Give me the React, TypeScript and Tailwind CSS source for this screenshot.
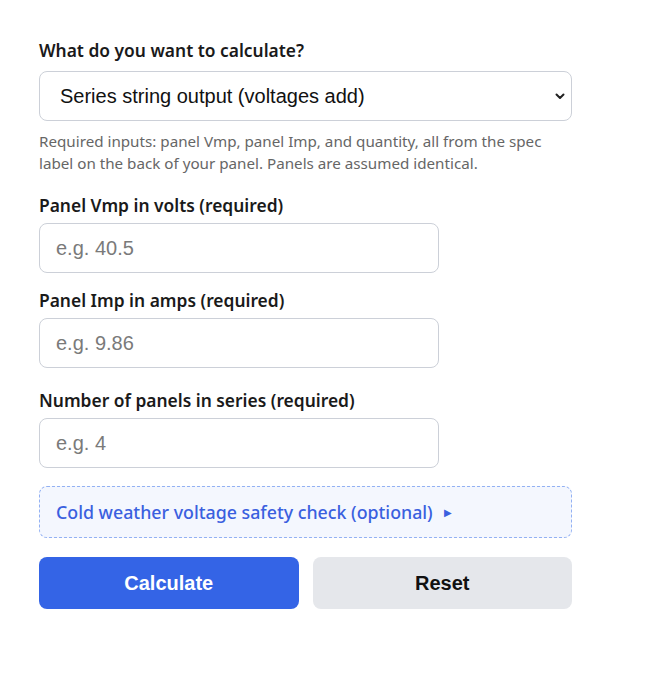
import { useState } from "react";

const labelCls =
    "block text-[17.4px] leading-6 font-semibold text-[#1a1a1a] font-['Noto_Sans','Segoe_UI',sans-serif]";
const inputCls =
    "block w-[400px] h-[50px] rounded-lg border border-[#ccd0d8] bg-white px-4 text-[20px] text-[#222] placeholder:text-[#7a7a7a] font-['Liberation_Sans',Arial,sans-serif] outline-none";

function Field({ label, placeholder, className }: { label: string; placeholder: string; className?: string }) {
    return (
        <div className={className}>
            <label className={labelCls}>{label}</label>
            <input type="text" inputMode="decimal" placeholder={placeholder} className={`${inputCls} mt-[6px]`} />
        </div>
    );
}

export default function App() {
    const [mode, setMode] = useState("series");

    return (
        <div className="min-h-screen bg-white pt-[38px] pl-[39px]">
            <div className="w-[533px]">
                <label className={labelCls}>What do you want to calculate?</label>
                <div className="relative mt-[9px]">
                    <select
                        value={mode}
                        onChange={e => setMode(e.target.value)}
                        className="block w-full h-[50px] appearance-none rounded-lg border border-[#ccd0d8] bg-white pl-[20px] pr-10 text-[20px] text-[#111] font-['Liberation_Sans',Arial,sans-serif] outline-none"
                    >
                        <option value="series">Series string output (voltages add)</option>
                        <option value="parallel">Parallel output (currents add)</option>
                    </select>
                    <svg
                        className="pointer-events-none absolute right-[6px] top-1/2 -translate-y-1/2"
                        width="12"
                        height="12"
                        viewBox="0 0 12 12"
                        fill="none"
                    >
                        <path d="M2.5 4.5 L6 8 L9.5 4.5" stroke="#222" strokeWidth="2" strokeLinecap="round" strokeLinejoin="round" />
                    </svg>
                </div>
                <p className="mt-[9px] text-[15.2px] leading-[22px] text-[#666] font-['Noto_Sans','Segoe_UI',sans-serif]">
                    Required inputs: panel Vmp, panel Imp, and quantity, all from the spec label on the back of your panel. Panels are assumed identical.
                </p>

                <Field className="mt-[19px]" label="Panel Vmp in volts (required)" placeholder="e.g. 40.5" />
                <Field className="mt-[15px]" label="Panel Imp in amps (required)" placeholder="e.g. 9.86" />
                <Field className="mt-[20px]" label="Number of panels in series (required)" placeholder="e.g. 4" />

                <details className="mt-[18px] rounded-lg border border-dashed border-[#93b1f3] bg-[#f4f7fe]">
                    <summary className="flex h-[50px] cursor-pointer list-none items-center px-4 text-[17.8px] font-medium text-[#3a60df] font-['Noto_Sans','Segoe_UI',sans-serif] [&::-webkit-details-marker]:hidden">
                        Cold weather voltage safety check (optional)
                        <span className="ml-[11px] text-[10px]">▶</span>
                    </summary>
                </details>

                <div className="mt-[19px] grid grid-cols-2 gap-[14px]">
                    <button className="h-[52px] rounded-lg bg-[#3464e6] text-[20px] font-bold text-white font-['Liberation_Sans',Arial,sans-serif]">
                        Calculate
                    </button>
                    <button className="h-[52px] rounded-lg bg-[#e5e7eb] text-[20px] font-bold text-[#111] font-['Liberation_Sans',Arial,sans-serif]">
                        Reset
                    </button>
                </div>
            </div>
        </div>
    );
}
